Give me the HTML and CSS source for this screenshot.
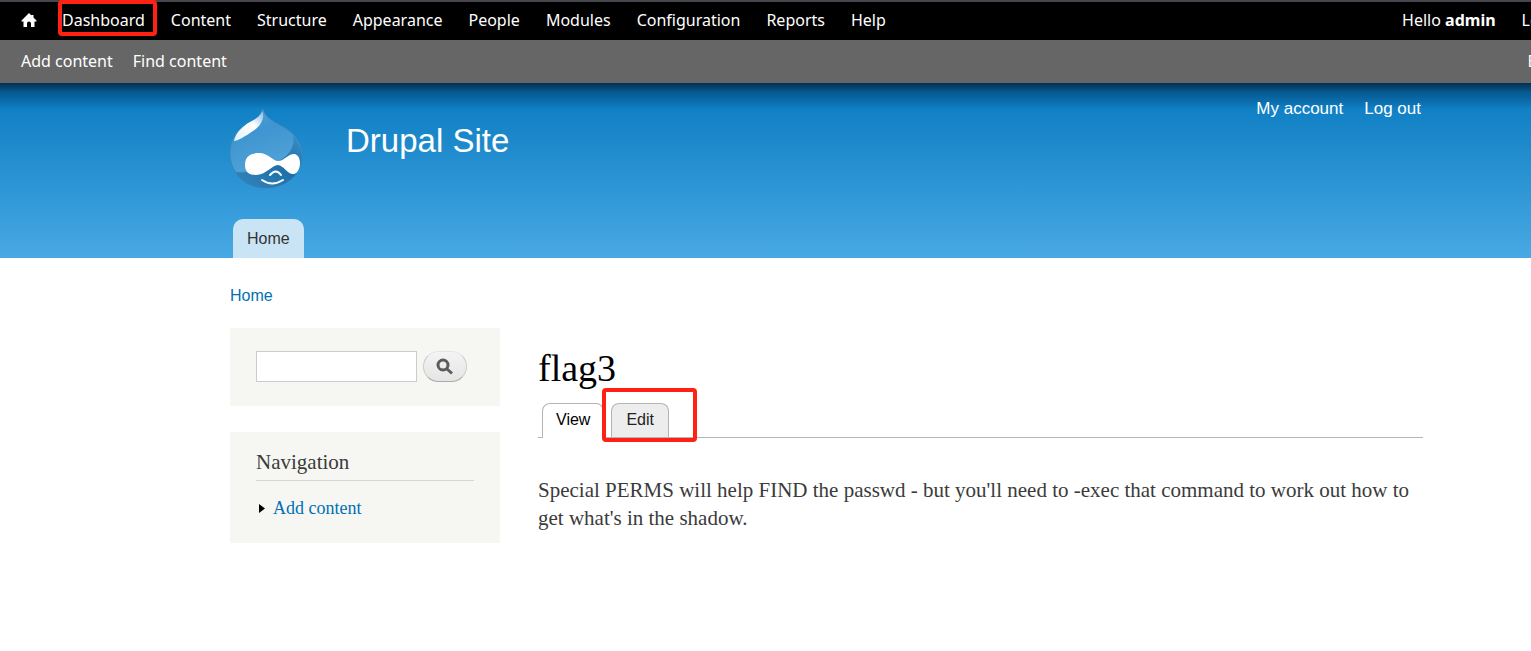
FILE: index.html
```html
<!DOCTYPE html>
<html lang="en">
<head>
<meta charset="utf-8">
<title>flag3 | Drupal Site</title>
<link rel="stylesheet" href="styles.css">
</head>
<body>
<div class="page">
  <div class="toolbar">
    <nav class="toolbar-menu">
      <a class="home-link" href="#" aria-label="Home"><svg width="16" height="14" viewBox="0 0 16 14"><path fill="#fff" d="M8 0 15.500 7.500V8.500H13.500V14H10V10.500Q10 8.500 8 8.500T6 10.500V14H2.500V8.500H.5V7.500zM10.500 2H12.500V5L10.500 3z"/></svg></a>
      <a class="marked" href="#">Dashboard</a>
      <a href="#">Content</a>
      <a href="#">Structure</a>
      <a href="#">Appearance</a>
      <a href="#">People</a>
      <a href="#">Modules</a>
      <a href="#">Configuration</a>
      <a href="#">Reports</a>
      <a href="#">Help</a>
    </nav>
    <div class="toolbar-user"><span>Hello <strong>admin</strong></span><a href="#">Log out</a></div>
  </div>
  <div class="shortcuts">
    <nav class="shortcut-menu"><a href="#">Add content</a><a href="#">Find content</a></nav>
    <a class="edit-shortcuts" href="#">Edit shortcuts</a>
  </div>
  <header class="header">
    <div class="container header-inner">
      <div class="branding">
        <a class="logo" href="#" aria-label="Drupal Site home">
          <svg width="76" height="82" viewBox="0 0 76 82">
            <defs>
              <linearGradient id="drop" x1="0" y1="0" x2="0.3" y2="1"><stop offset="0" stop-color="#5aa5d6"/><stop offset=".35" stop-color="#3e95d1"/><stop offset=".75" stop-color="#4ea0d5"/><stop offset="1" stop-color="#3a87bb"/></linearGradient>
              <linearGradient id="shade" x1="1" y1="0" x2="0" y2="1"><stop offset="0" stop-color="#3a8fc8"/><stop offset=".45" stop-color="#1e70aa"/><stop offset="1" stop-color="#3586bc"/></linearGradient>
              <linearGradient id="shine" x1="1" y1="0" x2="0" y2="1"><stop offset="0" stop-color="#fff" stop-opacity=".3"/><stop offset=".4" stop-color="#fff"/><stop offset="1" stop-color="#fff" stop-opacity=".85"/></linearGradient>
            </defs>
            <path fill="url(#drop)" stroke="#3a88bb" d="M35 1C37 9 43 12 52 17C66 24 74 34 74 48C74 67 57 80 38 80C18 80 2 65 2 45C2 29 11 20 22 14C30 10 34 7 35 1z"/>
            <path fill="url(#shade)" d="M65 27C68 39 60 48 50 54C38 61 20 66 7 64C13 74 24 80 38 80C57 80 74 67 74 48Q73 36 65 27z"/>
            <path fill="url(#shine)" d="M34 2C37 9 34 17 25 23C18 28 9 33 6 33C8 24 15 18 22 14C30 10 33 7 34 2z"/>
            <path fill="#fff" d="M17 57C17 48 23 45 31 45C40 45 45 53 50 53C56 53 60 46 66 46C75 47 73 65 66 66C60 67 55 57 50 57C44 57 38 67 28 67C21 67 17 64 17 57z"/>
            <path fill="none" stroke="#fff" stroke-width="2" stroke-linecap="round" d="M42 67Q48 60 53 67M34 72Q44 79 55 72"/>
          </svg>
        </a>
        <a class="site-name" href="#">Drupal Site</a>
        <nav class="user-menu"><a href="#">My account</a><a href="#">Log out</a></nav>
      </div>
      <nav class="main-menu"><a href="#">Home</a></nav>
    </div>
  </header>
  <div class="container">
    <nav class="breadcrumb"><a href="#">Home</a></nav>
    <div class="columns">
      <aside class="sidebar">
        <form class="block search">
          <input class="search-input" type="text" aria-label="Search">
          <button class="search-button" type="button" aria-label="Search"><svg width="18" height="18" viewBox="0 0 18 18" fill="none" stroke="#5c5c5c"><circle cx="7" cy="7" r="5" stroke-width="3"/><path d="M10.500 10.500 16 15.500" stroke-width="3"/></svg></button>
        </form>
        <section class="block">
          <h2 class="block-title">Navigation</h2>
          <ul class="nav-list"><li><svg width="6" height="9" viewBox="0 0 6 9"><path d="M0 0 6 4.500 0 9z"/></svg><a href="#">Add content</a></li></ul>
        </section>
      </aside>
      <main class="content">
        <h1 class="title">flag3</h1>
        <nav class="tabs"><a class="tab active" href="#">View</a><span class="tab-mark"><a class="tab" href="#">Edit</a></span></nav>
        <p class="text">Special PERMS will help FIND the passwd - but you'll need to -exec that command to work out how to get what's in the shadow.</p>
      </main>
    </div>
  </div>
</div>
</body>
</html>
```
FILE: styles.css
```css
* { box-sizing: border-box; }
body { margin: 0; background: #fff; overflow-x: hidden; font-family: "Liberation Sans", Arial, sans-serif; font-size: 16px; color: #3b3b3b; }
a { color: #0071b3; text-decoration: none; }
svg { display: block; }

/* The page is wider than the window, as when it is scrolled to its left edge. */
.page { width: calc(100% + 122px); }

.toolbar, .shortcuts { display: flex; justify-content: space-between; align-items: flex-start; font-family: "Noto Sans", Verdana, sans-serif; font-size: 16px; line-height: 20px; color: #fff; white-space: nowrap; }
.toolbar a, .shortcuts a { color: #fff; }
.toolbar { height: 40px; padding: 8px 74px 0 21px; background: #000; border-top: 2px solid #45454d; }
.toolbar-menu, .toolbar-user { display: flex; align-items: flex-start; gap: 26px; }
.home-link { margin-right: -1px; padding-top: 3px; }
.marked { position: relative; }
.marked::after, .tab-mark::after { content: ""; position: absolute; border: 4px solid #ff2114; border-radius: 4px; pointer-events: none; }
.marked::after { inset: -10px -12px -6px -4px; }
.shortcuts { height: 43px; padding: 11px 22px 0 21px; background: #666; }
.shortcut-menu { display: flex; gap: 20px; }

.container { width: 1193px; margin: 0 auto; }
.header { background: linear-gradient(#032f50, #07598f 9px, #0f78ba00 26px), linear-gradient(#0779bf, #48a9e4); }
.header-inner { display: flex; flex-direction: column; justify-content: space-between; height: 175px; }
.branding { display: flex; align-items: flex-start; padding-top: 25px; }
.logo { margin-left: -2px; }
.site-name { margin: 14px 0 0 42px; font-size: 33px; line-height: 38px; color: #fff; }
.user-menu { display: flex; gap: 21px; margin: -9px 2px 0 auto; font-size: 17px; line-height: 20px; }
.user-menu a { color: #fff; }
.main-menu { display: flex; padding-left: 3px; }
.main-menu a { padding: 10px 14px 9px; line-height: 20px; color: #333; background: #c9e4f5; border-radius: 10px 10px 0 0; }

.breadcrumb { padding: 28px 0 22px; line-height: 20px; }
.columns { display: flex; gap: 38px; align-items: flex-start; }
.sidebar { display: flex; flex-direction: column; gap: 26px; width: 270px; }
.block { padding: 20px 26px; background: #f6f6f2; font-family: "Liberation Serif", Georgia, serif; }
.search { display: flex; gap: 6px; padding: 23px 26px 24px; }
.search-input { width: 161px; height: 31px; border: 1px solid #ccc; background: #fff; font-size: 16px; }
.search-button { display: grid; place-items: center; width: 44px; height: 31px; padding: 0; border: 1px solid #ccc; border-color: #e4e4e4 #ccc #aaa; border-radius: 16px; background: linear-gradient(#f4f4f4, #e5e5e5); }
.block-title { margin: 0 0 16px; padding-bottom: 7px; border-bottom: 1px solid #d6d6d6; font-size: 21px; line-height: 21px; font-weight: 400; }
.nav-list { margin: 0; padding: 0 0 4px 3px; list-style: none; font-size: 18px; line-height: 22px; }
.nav-list li { display: flex; align-items: center; gap: 8px; }

.content { flex: 1; padding-top: 18px; font-family: "Liberation Serif", Georgia, serif; }
.title { margin: 0; font-size: 38px; line-height: 44px; font-weight: 400; color: #000; }
.tabs { display: flex; gap: 7px; margin-top: 13px; padding-left: 4px; border-bottom: 1px solid #b4b4b4; font-family: "Liberation Sans", Arial, sans-serif; line-height: 20px; }
.tab { display: block; padding: 6px 14px 7px; border: 1px solid #b4b4b4; border-bottom: 0; border-radius: 8px 8px 0 0; background: #ededed; color: #222; }
.active { margin-bottom: -1px; padding: 6px 13px 8px; background: #fff; color: #000; }
.tab-mark { position: relative; }
.tab-mark::after { inset: -15px -28px -5px -9px; }
.text { margin: 38px 0 0; font-size: 21px; line-height: 28px; }
```
